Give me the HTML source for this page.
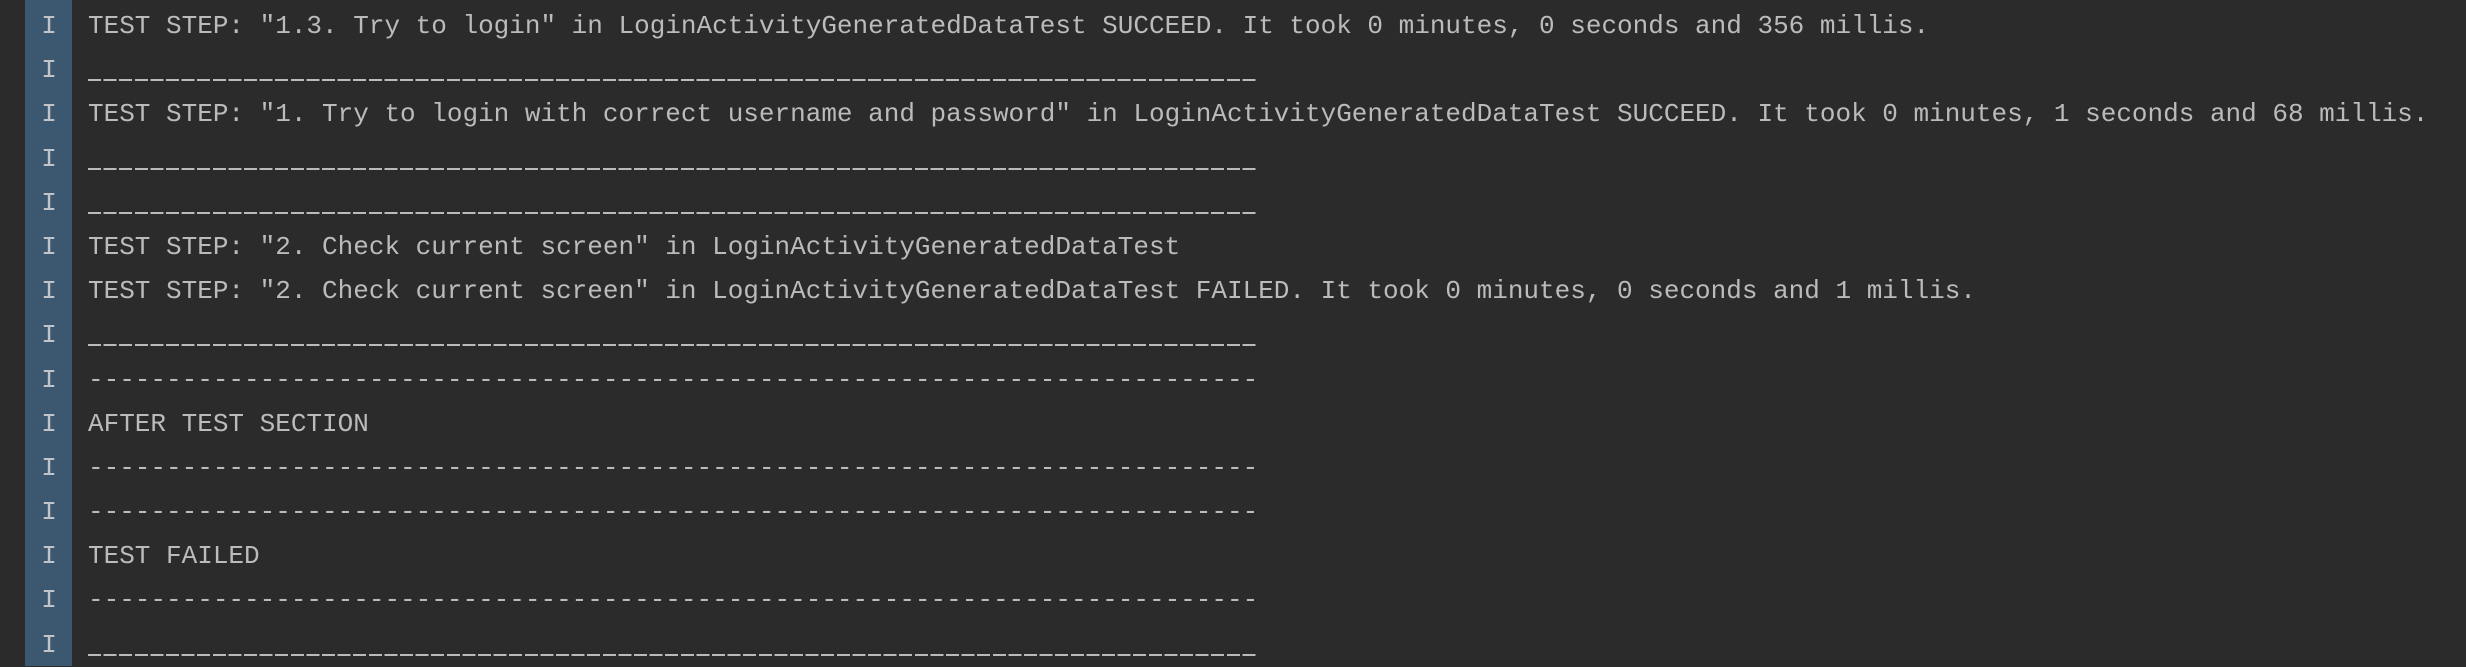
<!DOCTYPE html>
<html><head><style>
html,body{margin:0;padding:0;background:#2b2b2b;width:2466px;height:666px;overflow:hidden}
.g{position:absolute;left:25px;top:0;width:47px;height:666px;background:#3b5870}
.c{position:absolute;left:0;top:4px;font-family:"Liberation Mono",monospace;font-size:26px;line-height:44.2px;color:#bbbbbb}
.c div{height:44.2px;white-space:pre}
.i{display:inline-block;width:88px;text-align:center;box-sizing:border-box;padding-left:10px;color:#c0c4c8}
.u{color:transparent;background-image:repeating-linear-gradient(90deg,#bbbbbb 0 13px,transparent 13px 15.6px);background-size:100% 2px;background-repeat:no-repeat;background-position:0 calc(100% - 4px)}
</style></head><body>
<div class="g"></div>
<div class="c"><div><span class="i">I</span>TEST STEP: "1.3. Try to login" in LoginActivityGeneratedDataTest SUCCEED. It took 0 minutes, 0 seconds and 356 millis.</div><div><span class="i">I</span><span class="u">___________________________________________________________________________</span></div><div><span class="i">I</span>TEST STEP: "1. Try to login with correct username and password" in LoginActivityGeneratedDataTest SUCCEED. It took 0 minutes, 1 seconds and 68 millis.</div><div><span class="i">I</span><span class="u">___________________________________________________________________________</span></div><div><span class="i">I</span><span class="u">___________________________________________________________________________</span></div><div><span class="i">I</span>TEST STEP: "2. Check current screen" in LoginActivityGeneratedDataTest</div><div><span class="i">I</span>TEST STEP: "2. Check current screen" in LoginActivityGeneratedDataTest FAILED. It took 0 minutes, 0 seconds and 1 millis.</div><div><span class="i">I</span><span class="u">___________________________________________________________________________</span></div><div><span class="i">I</span>---------------------------------------------------------------------------</div><div><span class="i">I</span>AFTER TEST SECTION</div><div><span class="i">I</span>---------------------------------------------------------------------------</div><div><span class="i">I</span>---------------------------------------------------------------------------</div><div><span class="i">I</span>TEST FAILED</div><div><span class="i">I</span>---------------------------------------------------------------------------</div><div><span class="i">I</span><span class="u">___________________________________________________________________________</span></div></div>
</body></html>
